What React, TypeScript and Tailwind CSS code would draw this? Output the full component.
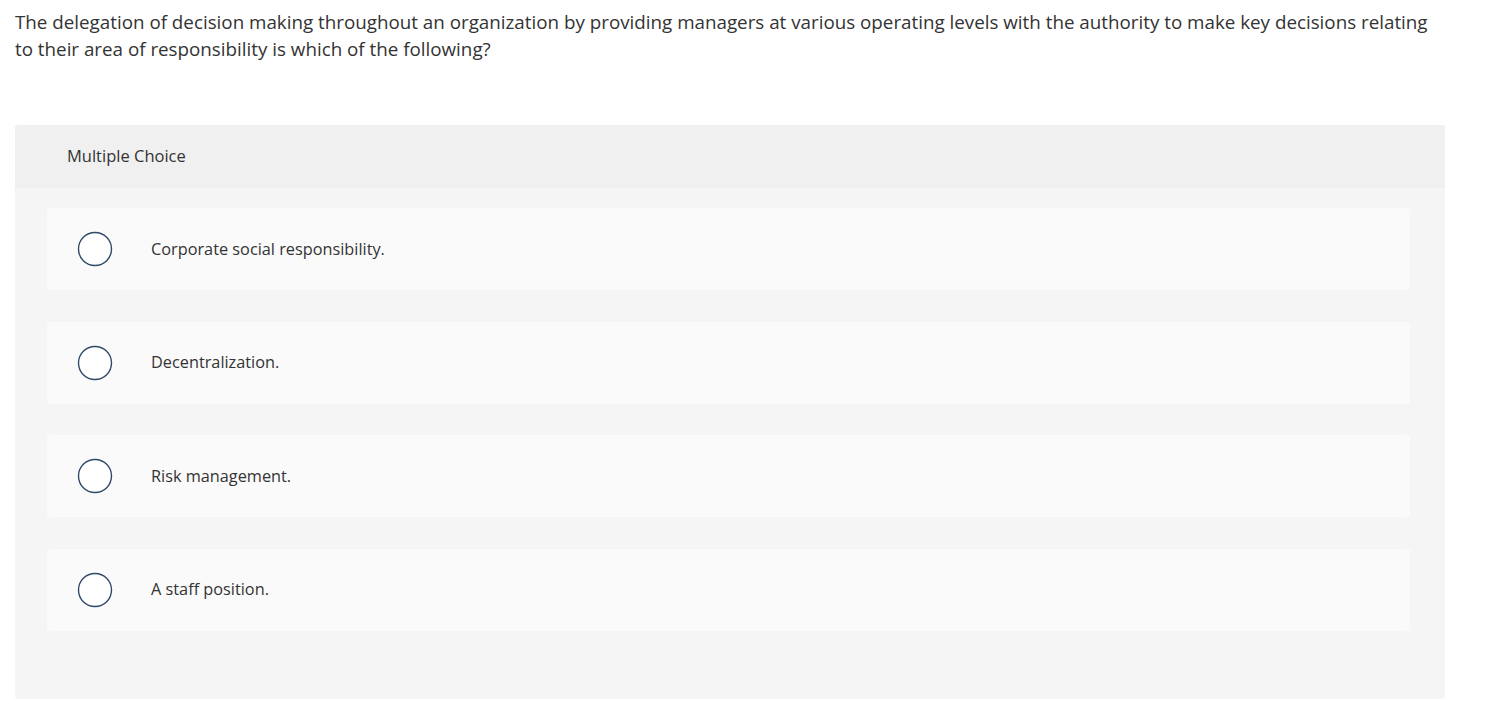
import React from 'react'

const options = [
    'Corporate social responsibility.',
    'Decentralization.',
    'Risk management.',
    'A staff position.',
]

function Radio() {
    return (
        <svg width="36" height="36" viewBox="0 0 36 36" className="shrink-0">
            <circle cx="18" cy="18" r="16.5" fill="#ffffff" stroke="#2f4a69" strokeWidth="1.4" />
        </svg>
    )
}

export default function App() {
    return (
        <div className="min-h-screen bg-white text-[#333333]" style={{ fontFamily: '"Open Sans", Lato, sans-serif' }}>
            <div className="pl-[15px] pr-[40px] pt-[9px]">
                <p className="text-[18.8px] leading-[27px]">
                    The delegation of decision making throughout an organization by providing managers at various operating levels with the authority to make key decisions relating to their area of responsibility is which of the following?
                </p>
            </div>

            <div className="mx-[15px] mt-[62px] w-[1430px] rounded-[3px] bg-[#f5f5f5] overflow-hidden">
                <div className="h-[63px] bg-[#f0f0f0] flex items-center pl-[52px]">
                    <span className="text-[16.5px]">Multiple Choice</span>
                </div>
                <div className="pl-[32px] pr-[35px] pt-[20px] pb-[68px] flex flex-col gap-[31.5px]">
                    {options.map((opt) => (
                        <div key={opt} className="h-[82px] rounded-[3px] bg-[#fafafa] flex items-center pl-[30px]">
                            <Radio />
                            <span className="ml-[38px] text-[16.3px]">{opt}</span>
                        </div>
                    ))}
                </div>
            </div>
        </div>
    )
}
